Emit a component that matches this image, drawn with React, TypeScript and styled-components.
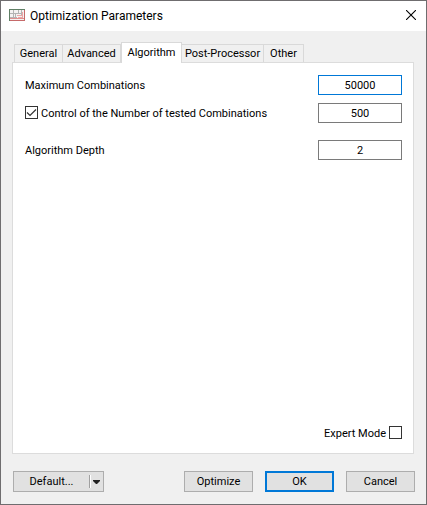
import React, { useState } from "react";
import styled, { createGlobalStyle } from "styled-components";

const GlobalStyle = createGlobalStyle`
  *, *::before, *::after { box-sizing: border-box; }
  body { margin: 0; }
  button, input { font: inherit; color: inherit; margin: 0; }
`;

const Dialog = styled.main`
  display: flex;
  flex-direction: column;
  min-height: 100vh;
  border: 1px solid #6f6d6f;
  background: #f0f0f0;
  color: #000;
  font-family: Roboto, "Open Sans", sans-serif;
  font-size: 11px;
  line-height: 16px;
  white-space: nowrap;
`;

const TitleBar = styled.header`
  display: flex;
  align-items: center;
  gap: 5px;
  height: 30px;
  padding: 0 10px 2px 8px;
  background: #fff;
`;

const Title = styled.h1`
  flex: 1;
  margin: 0;
  padding-top: 2px;
  font-size: 12px;
  line-height: 18px;
  font-weight: 400;
`;

const CloseButton = styled.button`
  display: flex;
  padding: 0;
  border: 0;
  background: none;
`;

const Content = styled.div`
  flex: 1;
  display: flex;
  flex-direction: column;
  padding: 11px 12px 12px 11px;
`;

const TabList = styled.div`
  display: flex;
  align-items: flex-end;
  padding-left: 2px;
`;

const Tab = styled.button<{ $active: boolean; $width: number }>`
  width: ${(p) => p.$width}px;
  height: ${(p) => (p.$active ? 21 : 18)}px;
  margin-bottom: ${(p) => (p.$active ? -1 : 0)}px;
  padding: ${(p) => (p.$active ? 0 : 1)}px 0 0;
  border: 1px solid #d9d9d9;
  border-bottom: 0;
  border-left-width: ${(p) => (p.$active ? 1 : 0)}px;
  background: ${(p) => (p.$active ? "#fff" : "#f0f0f0")};
  position: relative;
  line-height: 16px;

  &:first-child { border-left-width: 1px; }
`;

const Panel = styled.section`
  flex: 1;
  display: flex;
  flex-direction: column;
  padding: 12px 11px 10px;
  border: 1px solid #dcdcdc;
  background: #fff;
`;

const Row = styled.div<{ $spaced?: boolean }>`
  display: flex;
  align-items: center;
  justify-content: space-between;
  margin-top: ${(p) => (p.$spaced ? 9 : 0)}px;
  margin-bottom: 8px;
  padding-left: 1px;
`;

const Label = styled.label`
  display: flex;
  align-items: flex-start;
  gap: 3px;
  height: 20px;
  padding-top: 3px;
`;

const NumberBox = styled.input<{ $focused?: boolean }>`
  width: 84px;
  height: 20px;
  padding: 0;
  border: 1px solid ${(p) => (p.$focused ? "#0078d7" : "#7a7a7a")};
  background: #fff;
  text-align: center;
  outline: none;
`;

const CheckBox = styled.input.attrs({ type: "checkbox" })`
  appearance: none;
  flex: none;
  width: 13px;
  height: 13px;
  border: 1px solid #333;
  background: #fff;

  &:checked {
    background: #fff
      url("data:image/svg+xml,%3Csvg xmlns='http://www.w3.org/2000/svg' viewBox='0 0 11 11'%3E%3Cpath d='M1 5.5L4 8.5L10 2.5' fill='none' stroke='%23333' stroke-width='1.2'/%3E%3C/svg%3E")
      center / 11px 11px no-repeat;
  }
`;

const PanelFooter = styled.div`
  display: flex;
  justify-content: flex-end;
  margin-top: auto;
`;

const Actions = styled.footer`
  display: flex;
  gap: 12px;
  padding: 17px 0 0 1px;
  margin-right: -1px;
`;

const Button = styled.button<{ $primary?: boolean }>`
  width: 69px;
  height: 21px;
  padding: 0;
  border: ${(p) => (p.$primary ? "2px solid #0078d7" : "1px solid #adadad")};
  background: #e1e1e1;
  line-height: 16px;
`;

const SplitButton = styled.div`
  display: flex;
  align-items: center;
  width: 91px;
  height: 21px;
  margin-right: auto;
  border: 1px solid #adadad;
  background: #e1e1e1;
`;

const SplitMain = styled.button`
  flex: 1;
  padding: 0;
  border: 0;
  background: none;
  line-height: 16px;
`;

const SplitArrow = styled.button`
  display: flex;
  align-items: center;
  width: 14px;
  height: 13px;
  padding: 0 0 0 3px;
  border: 0;
  border-left: 1px solid #a0a0a0;
  box-shadow: inset 1px 0 #fff;
  background: none;
`;

const AppIcon = () => (
  <svg width="16" height="12" viewBox="0 0 16 12" aria-hidden="true" shapeRendering="crispEdges">
    <rect width="16" height="12" fill="#f4f2f2" />
    <path d="M1 4.5H14M1 8.5H8M4.5 1V8M9.5 1V5M12.5 1V7M6.5 5V8" stroke="#b3b3b3" fill="none" />
    <path d="M8 6.5H14M13.5 3V10M9 8.5H14" stroke="#eba6a6" fill="none" />
    <path d="M1 9.5H15" stroke="#e08f8f" fill="none" />
    <path d="M15.5 1V12M1 11.5H16" stroke="#c66a6a" fill="none" />
    <path d="M0 .5H16M.5 0V12" stroke="#5f7f65" fill="none" />
  </svg>
);

const CloseIcon = () => (
  <svg width="10" height="10" viewBox="0 0 10 10" aria-hidden="true">
    <path d="M0 0L10 10M10 0L0 10" stroke="#000" strokeWidth="1.1" />
  </svg>
);

const ArrowIcon = () => (
  <svg width="7" height="4" viewBox="0 0 7 4" aria-hidden="true">
    <path d="M0 0H7V1L4 4H3L0 1Z" fill="#222" />
  </svg>
);

const tabs = [
  { name: "General", width: 49 },
  { name: "Advanced", width: 58 },
  { name: "Algorithm", width: 61 },
  { name: "Post-Processor", width: 82 },
  { name: "Other", width: 40 },
];

export default function App() {
  const [active, setActive] = useState("Algorithm");
  return (
    <>
      <GlobalStyle />
      <Dialog>
        <TitleBar>
          <AppIcon />
          <Title>Optimization Parameters</Title>
          <CloseButton aria-label="Close"><CloseIcon /></CloseButton>
        </TitleBar>
        <Content>
          <TabList role="tablist">
            {tabs.map((t) => (
              <Tab
                key={t.name}
                role="tab"
                aria-selected={active === t.name}
                $active={active === t.name}
                $width={t.width}
                onClick={() => setActive(t.name)}
              >
                {t.name}
              </Tab>
            ))}
          </TabList>
          <Panel role="tabpanel" aria-label={active}>
            <Row>
              <Label htmlFor="max">Maximum Combinations</Label>
              <NumberBox id="max" defaultValue="50000" $focused />
            </Row>
            <Row>
              <Label>
                <CheckBox defaultChecked />
                Control of the Number of tested Combinations
              </Label>
              <NumberBox aria-label="Number of tested Combinations" defaultValue="500" />
            </Row>
            <Row $spaced>
              <Label htmlFor="depth">Algorithm Depth</Label>
              <NumberBox id="depth" defaultValue="2" />
            </Row>
            <PanelFooter>
              <Label>
                Expert Mode
                <CheckBox />
              </Label>
            </PanelFooter>
          </Panel>
          <Actions>
            <SplitButton>
              <SplitMain>Default...</SplitMain>
              <SplitArrow aria-label="Default options"><ArrowIcon /></SplitArrow>
            </SplitButton>
            <Button>Optimize</Button>
            <Button $primary>OK</Button>
            <Button>Cancel</Button>
          </Actions>
        </Content>
      </Dialog>
    </>
  );
}
